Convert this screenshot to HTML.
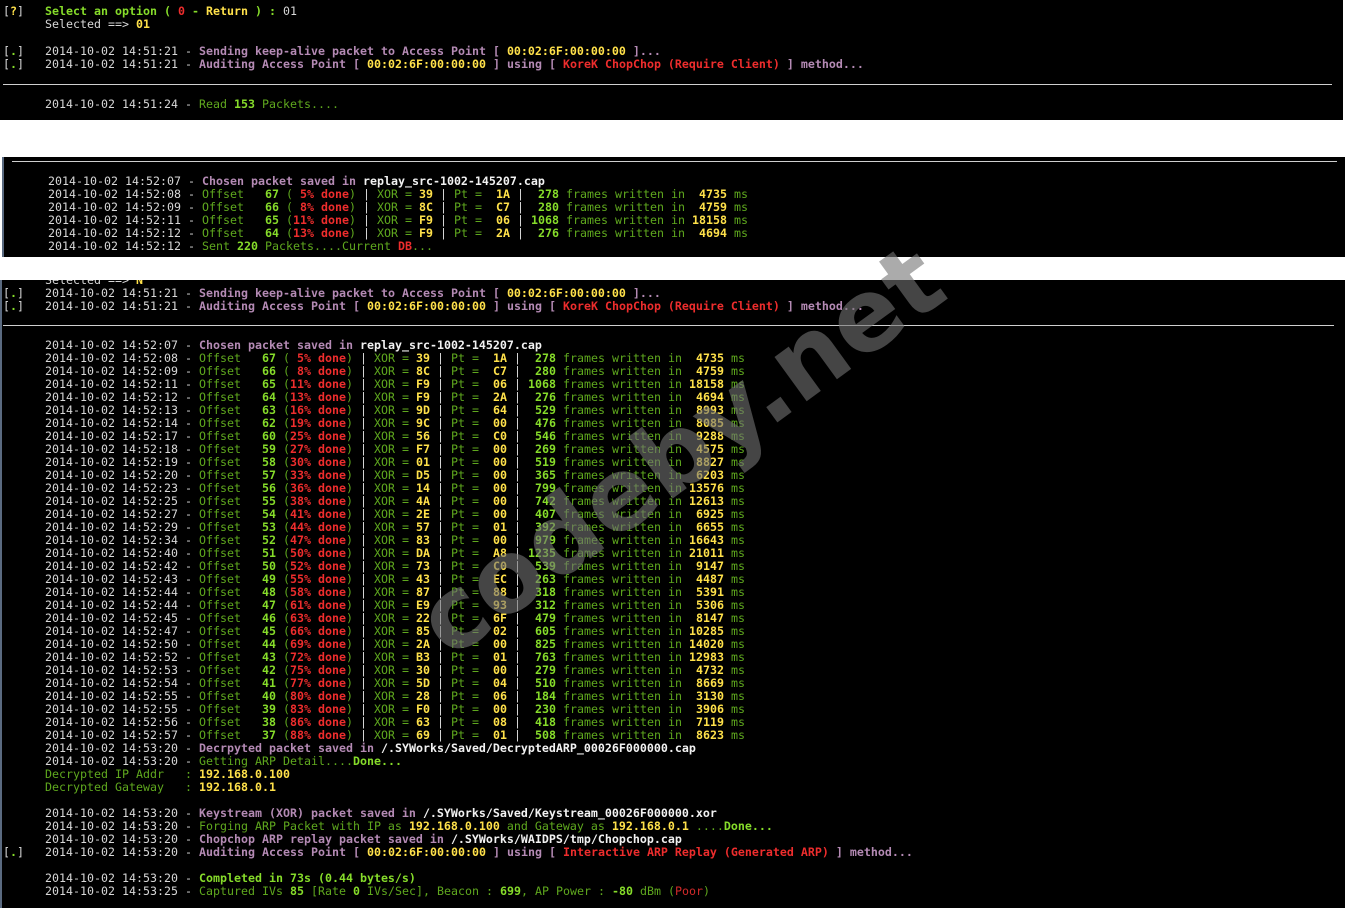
<!DOCTYPE html>
<html><head><meta charset="utf-8"><style>
body{margin:0;width:1350px;height:908px;background:#fff;position:relative;overflow:hidden;font-family:"DejaVu Sans Mono","Liberation Mono",monospace;font-size:11.63px;color:#d8d8d8}
.p{position:absolute;background:#000;overflow:hidden}
.blk{position:absolute;white-space:pre;line-height:13px}
.hr{position:absolute;height:1px;background:#cfcfcf}
gn{color:#5fa81e}
gb{color:#86dc2a;font-weight:bold}
yb{color:#ffe14a;font-weight:bold}
rb{color:#ee2d2d;font-weight:bold}
rn{color:#d22a2a}
pb{color:#b48ab4;font-weight:bold}
wb{color:#f2f2f2;font-weight:bold}
.wm{position:absolute;left:370px;top:392px;width:620px;text-align:center;font-family:"DejaVu Sans","Liberation Sans",sans-serif;font-weight:bold;font-size:100px;color:rgba(115,115,115,0.6);transform:rotate(-36deg);transform-origin:center;white-space:nowrap}
</style></head><body>

<div class="p" style="left:0;top:0;width:1343px;height:120px">
<div class="blk" style="left:3px;top:5px">[<yb>?</yb>]   <gb>Select an option ( <rb>0</rb> - <yb>Return</yb> ) : </gb>01
      Selected ==&gt; <yb>01</yb>
</div>
<div class="blk" style="left:3px;top:45px">[<gb>.</gb>]   2014-10-02 14:51:21 - <pb>Sending keep-alive packet to Access Point [ <yb>00:02:6F:00:00:00</yb> ]...</pb>
[<gb>.</gb>]   2014-10-02 14:51:21 - <pb>Auditing Access Point [ <yb>00:02:6F:00:00:00</yb> ] using [ <rb>KoreK ChopChop (Require Client)</rb> ] method...</pb>
</div>
<div class="hr" style="left:3px;top:84px;width:1329px"></div>
<div class="blk" style="left:3px;top:98px">      2014-10-02 14:51:24 - <gn>Read </gn><gb>153</gb><gn> Packets....</gn></div>
</div>

<div class="p" style="left:2px;top:157px;width:1343px;height:100px;border-left:2px solid #5a6a80;box-sizing:border-box">
<div class="hr" style="left:8px;top:4px;width:1325px"></div>
<div class="blk" style="left:2px;top:18px">      2014-10-02 14:52:07 - <pb>Chosen packet saved in </pb><wb>replay_src-1002-145207.cap</wb>
      2014-10-02 14:52:08 - <gn>Offset   </gn><gb>67</gb> <gn>(</gn><rb> 5% done</rb><gn>)</gn> | <gn>XOR = </gn><yb>39</yb> | <gn>Pt =  </gn><yb>1A</yb> | <gb> 278</gb> <gn>frames written in </gn><yb> 4735</yb> <gn>ms</gn>
      2014-10-02 14:52:09 - <gn>Offset   </gn><gb>66</gb> <gn>(</gn><rb> 8% done</rb><gn>)</gn> | <gn>XOR = </gn><yb>8C</yb> | <gn>Pt =  </gn><yb>C7</yb> | <gb> 280</gb> <gn>frames written in </gn><yb> 4759</yb> <gn>ms</gn>
      2014-10-02 14:52:11 - <gn>Offset   </gn><gb>65</gb> <gn>(</gn><rb>11% done</rb><gn>)</gn> | <gn>XOR = </gn><yb>F9</yb> | <gn>Pt =  </gn><yb>06</yb> | <gb>1068</gb> <gn>frames written in </gn><yb>18158</yb> <gn>ms</gn>
      2014-10-02 14:52:12 - <gn>Offset   </gn><gb>64</gb> <gn>(</gn><rb>13% done</rb><gn>)</gn> | <gn>XOR = </gn><yb>F9</yb> | <gn>Pt =  </gn><yb>2A</yb> | <gb> 276</gb> <gn>frames written in </gn><yb> 4694</yb> <gn>ms</gn>
      2014-10-02 14:52:12 - <gn>Sent </gn><gb>220</gb><gn> Packets....Current </gn><rb>DB</rb><gn>...</gn></div>
</div>

<div class="p" style="left:0;top:280px;width:1345px;height:628px;border-left:2px solid #5a6a80;box-sizing:border-box">
<div class="blk" style="left:1px;top:-6px">      Selected ==&gt; <yb>N</yb></div>
<div class="blk" style="left:1px;top:7px">[<gb>.</gb>]   2014-10-02 14:51:21 - <pb>Sending keep-alive packet to Access Point [ <yb>00:02:6F:00:00:00</yb> ]...</pb>
[<gb>.</gb>]   2014-10-02 14:51:21 - <pb>Auditing Access Point [ <yb>00:02:6F:00:00:00</yb> ] using [ <rb>KoreK ChopChop (Require Client)</rb> ] method...</pb>
</div>
<div class="hr" style="left:1px;top:45px;width:1331px"></div>
<div class="blk" style="left:1px;top:59px">      2014-10-02 14:52:07 - <pb>Chosen packet saved in </pb><wb>replay_src-1002-145207.cap</wb>
      2014-10-02 14:52:08 - <gn>Offset   </gn><gb>67</gb> <gn>(</gn><rb> 5% done</rb><gn>)</gn> | <gn>XOR = </gn><yb>39</yb> | <gn>Pt =  </gn><yb>1A</yb> | <gb> 278</gb> <gn>frames written in </gn><yb> 4735</yb> <gn>ms</gn>
      2014-10-02 14:52:09 - <gn>Offset   </gn><gb>66</gb> <gn>(</gn><rb> 8% done</rb><gn>)</gn> | <gn>XOR = </gn><yb>8C</yb> | <gn>Pt =  </gn><yb>C7</yb> | <gb> 280</gb> <gn>frames written in </gn><yb> 4759</yb> <gn>ms</gn>
      2014-10-02 14:52:11 - <gn>Offset   </gn><gb>65</gb> <gn>(</gn><rb>11% done</rb><gn>)</gn> | <gn>XOR = </gn><yb>F9</yb> | <gn>Pt =  </gn><yb>06</yb> | <gb>1068</gb> <gn>frames written in </gn><yb>18158</yb> <gn>ms</gn>
      2014-10-02 14:52:12 - <gn>Offset   </gn><gb>64</gb> <gn>(</gn><rb>13% done</rb><gn>)</gn> | <gn>XOR = </gn><yb>F9</yb> | <gn>Pt =  </gn><yb>2A</yb> | <gb> 276</gb> <gn>frames written in </gn><yb> 4694</yb> <gn>ms</gn>
      2014-10-02 14:52:13 - <gn>Offset   </gn><gb>63</gb> <gn>(</gn><rb>16% done</rb><gn>)</gn> | <gn>XOR = </gn><yb>9D</yb> | <gn>Pt =  </gn><yb>64</yb> | <gb> 529</gb> <gn>frames written in </gn><yb> 8993</yb> <gn>ms</gn>
      2014-10-02 14:52:14 - <gn>Offset   </gn><gb>62</gb> <gn>(</gn><rb>19% done</rb><gn>)</gn> | <gn>XOR = </gn><yb>9C</yb> | <gn>Pt =  </gn><yb>00</yb> | <gb> 476</gb> <gn>frames written in </gn><yb> 8085</yb> <gn>ms</gn>
      2014-10-02 14:52:17 - <gn>Offset   </gn><gb>60</gb> <gn>(</gn><rb>25% done</rb><gn>)</gn> | <gn>XOR = </gn><yb>56</yb> | <gn>Pt =  </gn><yb>C0</yb> | <gb> 546</gb> <gn>frames written in </gn><yb> 9288</yb> <gn>ms</gn>
      2014-10-02 14:52:18 - <gn>Offset   </gn><gb>59</gb> <gn>(</gn><rb>27% done</rb><gn>)</gn> | <gn>XOR = </gn><yb>F7</yb> | <gn>Pt =  </gn><yb>00</yb> | <gb> 269</gb> <gn>frames written in </gn><yb> 4575</yb> <gn>ms</gn>
      2014-10-02 14:52:19 - <gn>Offset   </gn><gb>58</gb> <gn>(</gn><rb>30% done</rb><gn>)</gn> | <gn>XOR = </gn><yb>01</yb> | <gn>Pt =  </gn><yb>00</yb> | <gb> 519</gb> <gn>frames written in </gn><yb> 8827</yb> <gn>ms</gn>
      2014-10-02 14:52:20 - <gn>Offset   </gn><gb>57</gb> <gn>(</gn><rb>33% done</rb><gn>)</gn> | <gn>XOR = </gn><yb>D5</yb> | <gn>Pt =  </gn><yb>00</yb> | <gb> 365</gb> <gn>frames written in </gn><yb> 6203</yb> <gn>ms</gn>
      2014-10-02 14:52:23 - <gn>Offset   </gn><gb>56</gb> <gn>(</gn><rb>36% done</rb><gn>)</gn> | <gn>XOR = </gn><yb>14</yb> | <gn>Pt =  </gn><yb>00</yb> | <gb> 799</gb> <gn>frames written in </gn><yb>13576</yb> <gn>ms</gn>
      2014-10-02 14:52:25 - <gn>Offset   </gn><gb>55</gb> <gn>(</gn><rb>38% done</rb><gn>)</gn> | <gn>XOR = </gn><yb>4A</yb> | <gn>Pt =  </gn><yb>00</yb> | <gb> 742</gb> <gn>frames written in </gn><yb>12613</yb> <gn>ms</gn>
      2014-10-02 14:52:27 - <gn>Offset   </gn><gb>54</gb> <gn>(</gn><rb>41% done</rb><gn>)</gn> | <gn>XOR = </gn><yb>2E</yb> | <gn>Pt =  </gn><yb>00</yb> | <gb> 407</gb> <gn>frames written in </gn><yb> 6925</yb> <gn>ms</gn>
      2014-10-02 14:52:29 - <gn>Offset   </gn><gb>53</gb> <gn>(</gn><rb>44% done</rb><gn>)</gn> | <gn>XOR = </gn><yb>57</yb> | <gn>Pt =  </gn><yb>01</yb> | <gb> 392</gb> <gn>frames written in </gn><yb> 6655</yb> <gn>ms</gn>
      2014-10-02 14:52:34 - <gn>Offset   </gn><gb>52</gb> <gn>(</gn><rb>47% done</rb><gn>)</gn> | <gn>XOR = </gn><yb>83</yb> | <gn>Pt =  </gn><yb>00</yb> | <gb> 979</gb> <gn>frames written in </gn><yb>16643</yb> <gn>ms</gn>
      2014-10-02 14:52:40 - <gn>Offset   </gn><gb>51</gb> <gn>(</gn><rb>50% done</rb><gn>)</gn> | <gn>XOR = </gn><yb>DA</yb> | <gn>Pt =  </gn><yb>A8</yb> | <gb>1235</gb> <gn>frames written in </gn><yb>21011</yb> <gn>ms</gn>
      2014-10-02 14:52:42 - <gn>Offset   </gn><gb>50</gb> <gn>(</gn><rb>52% done</rb><gn>)</gn> | <gn>XOR = </gn><yb>73</yb> | <gn>Pt =  </gn><yb>C0</yb> | <gb> 539</gb> <gn>frames written in </gn><yb> 9147</yb> <gn>ms</gn>
      2014-10-02 14:52:43 - <gn>Offset   </gn><gb>49</gb> <gn>(</gn><rb>55% done</rb><gn>)</gn> | <gn>XOR = </gn><yb>43</yb> | <gn>Pt =  </gn><yb>EC</yb> | <gb> 263</gb> <gn>frames written in </gn><yb> 4487</yb> <gn>ms</gn>
      2014-10-02 14:52:44 - <gn>Offset   </gn><gb>48</gb> <gn>(</gn><rb>58% done</rb><gn>)</gn> | <gn>XOR = </gn><yb>87</yb> | <gn>Pt =  </gn><yb>88</yb> | <gb> 318</gb> <gn>frames written in </gn><yb> 5391</yb> <gn>ms</gn>
      2014-10-02 14:52:44 - <gn>Offset   </gn><gb>47</gb> <gn>(</gn><rb>61% done</rb><gn>)</gn> | <gn>XOR = </gn><yb>E9</yb> | <gn>Pt =  </gn><yb>93</yb> | <gb> 312</gb> <gn>frames written in </gn><yb> 5306</yb> <gn>ms</gn>
      2014-10-02 14:52:45 - <gn>Offset   </gn><gb>46</gb> <gn>(</gn><rb>63% done</rb><gn>)</gn> | <gn>XOR = </gn><yb>22</yb> | <gn>Pt =  </gn><yb>6F</yb> | <gb> 479</gb> <gn>frames written in </gn><yb> 8147</yb> <gn>ms</gn>
      2014-10-02 14:52:47 - <gn>Offset   </gn><gb>45</gb> <gn>(</gn><rb>66% done</rb><gn>)</gn> | <gn>XOR = </gn><yb>85</yb> | <gn>Pt =  </gn><yb>02</yb> | <gb> 605</gb> <gn>frames written in </gn><yb>10285</yb> <gn>ms</gn>
      2014-10-02 14:52:50 - <gn>Offset   </gn><gb>44</gb> <gn>(</gn><rb>69% done</rb><gn>)</gn> | <gn>XOR = </gn><yb>2A</yb> | <gn>Pt =  </gn><yb>00</yb> | <gb> 825</gb> <gn>frames written in </gn><yb>14020</yb> <gn>ms</gn>
      2014-10-02 14:52:52 - <gn>Offset   </gn><gb>43</gb> <gn>(</gn><rb>72% done</rb><gn>)</gn> | <gn>XOR = </gn><yb>B3</yb> | <gn>Pt =  </gn><yb>01</yb> | <gb> 763</gb> <gn>frames written in </gn><yb>12983</yb> <gn>ms</gn>
      2014-10-02 14:52:53 - <gn>Offset   </gn><gb>42</gb> <gn>(</gn><rb>75% done</rb><gn>)</gn> | <gn>XOR = </gn><yb>30</yb> | <gn>Pt =  </gn><yb>00</yb> | <gb> 279</gb> <gn>frames written in </gn><yb> 4732</yb> <gn>ms</gn>
      2014-10-02 14:52:54 - <gn>Offset   </gn><gb>41</gb> <gn>(</gn><rb>77% done</rb><gn>)</gn> | <gn>XOR = </gn><yb>5D</yb> | <gn>Pt =  </gn><yb>04</yb> | <gb> 510</gb> <gn>frames written in </gn><yb> 8669</yb> <gn>ms</gn>
      2014-10-02 14:52:55 - <gn>Offset   </gn><gb>40</gb> <gn>(</gn><rb>80% done</rb><gn>)</gn> | <gn>XOR = </gn><yb>28</yb> | <gn>Pt =  </gn><yb>06</yb> | <gb> 184</gb> <gn>frames written in </gn><yb> 3130</yb> <gn>ms</gn>
      2014-10-02 14:52:55 - <gn>Offset   </gn><gb>39</gb> <gn>(</gn><rb>83% done</rb><gn>)</gn> | <gn>XOR = </gn><yb>F0</yb> | <gn>Pt =  </gn><yb>00</yb> | <gb> 230</gb> <gn>frames written in </gn><yb> 3906</yb> <gn>ms</gn>
      2014-10-02 14:52:56 - <gn>Offset   </gn><gb>38</gb> <gn>(</gn><rb>86% done</rb><gn>)</gn> | <gn>XOR = </gn><yb>63</yb> | <gn>Pt =  </gn><yb>08</yb> | <gb> 418</gb> <gn>frames written in </gn><yb> 7119</yb> <gn>ms</gn>
      2014-10-02 14:52:57 - <gn>Offset   </gn><gb>37</gb> <gn>(</gn><rb>88% done</rb><gn>)</gn> | <gn>XOR = </gn><yb>69</yb> | <gn>Pt =  </gn><yb>01</yb> | <gb> 508</gb> <gn>frames written in </gn><yb> 8623</yb> <gn>ms</gn>
      2014-10-02 14:53:20 - <pb>Decrpyted packet saved in </pb><wb>/.SYWorks/Saved/DecryptedARP_00026F000000.cap</wb>
      2014-10-02 14:53:20 - <gn>Getting ARP Detail....</gn><gb>Done...</gb>
      <gn>Decrypted IP Addr   : </gn><yb>192.168.0.100</yb>
      <gn>Decrypted Gateway   : </gn><yb>192.168.0.1</yb>

      2014-10-02 14:53:20 - <pb>Keystream (XOR) packet saved in </pb><wb>/.SYWorks/Saved/Keystream_00026F000000.xor</wb>
      2014-10-02 14:53:20 - <gn>Forging ARP Packet with IP as </gn><yb>192.168.0.100</yb><gn> and Gateway as </gn><yb>192.168.0.1</yb><gn> ....</gn><gb>Done...</gb>
      2014-10-02 14:53:20 - <pb>Chopchop ARP replay packet saved in </pb><wb>/.SYWorks/WAIDPS/tmp/Chopchop.cap</wb>
[<gb>.</gb>]   2014-10-02 14:53:20 - <pb>Auditing Access Point [ <yb>00:02:6F:00:00:00</yb> ] using [ <rb>Interactive ARP Replay (Generated ARP)</rb> ] method...</pb>

      2014-10-02 14:53:20 - <gb>Completed in 73s (0.44 bytes/s)</gb>
      2014-10-02 14:53:25 - <gn>Captured IVs </gn><gb>85</gb><gn> [Rate </gn><gb>0</gb><gn> IVs/Sec], Beacon : </gn><gb>699</gb><gn>, AP Power : </gn><gb>-80</gb><gn> dBm (</gn><rn>Poor</rn><gn>)</gn></div>
</div>

<div class="wm">codeby.net</div>
</body></html>
